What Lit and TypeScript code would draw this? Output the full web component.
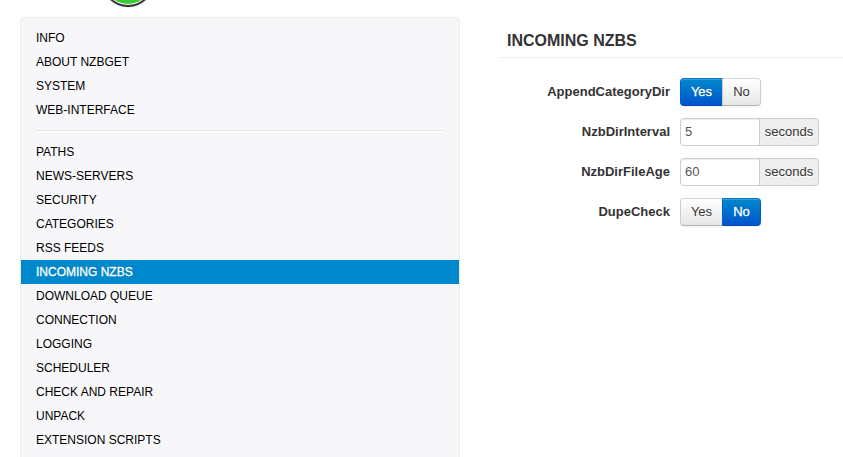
import { LitElement, html, css, svg } from "lit";
import { customElement, property } from "lit/decorators.js";
import { classMap } from "lit/directives/class-map.js";

const INFO_SECTIONS = ["Info", "About NZBGet", "System", "Web-Interface"];
const CONFIG_SECTIONS = [
  "Paths", "News-Servers", "Security", "Categories", "RSS Feeds", "Incoming NZBs",
  "Download Queue", "Connection", "Logging", "Scheduler", "Check and Repair",
  "Unpack", "Extension Scripts",
];

@customElement("option-switch")
export class OptionSwitch extends LitElement {
  @property() value = "Yes";

  static styles = css`
    :host { display: flex; }
    button {
      box-sizing: border-box;
      height: 28px;
      margin: 0;
      padding: 0 0 1px;
      font: 13px/20px "Liberation Sans", Arial, sans-serif;
      color: #333;
      text-shadow: 0 1px 1px rgba(255, 255, 255, 0.75);
      background: linear-gradient(#fff, #e6e6e6);
      border: 1px solid;
      border-color: #d5d5d5 #ccc #b3b3b3;
      box-shadow: inset 0 1px 0 rgba(255, 255, 255, 0.2), 0 1px 2px rgba(0, 0, 0, 0.05);
    }
    .first { width: 43px; border-radius: 4px 0 0 4px; }
    .last { width: 39px; margin-left: -1px; border-radius: 0 4px 4px 0; }
    .on {
      color: #fff;
      text-shadow: 0 -1px 0 rgba(0, 0, 0, 0.25);
      -webkit-text-stroke: 0.3px #fff;
      background: linear-gradient(#0088cc, #0055cc);
      border-color: #0077c5 #0060c8 #0048b8;
    }
  `;

  render() {
    return html`${["Yes", "No"].map(
      (label, i) => html`<button
        class=${classMap({ first: i === 0, last: i === 1, on: label === this.value })}
      >${label}</button>`
    )}`;
  }
}

@customElement("app-root")
export class AppRoot extends LitElement {
  static styles = css`
    :host {
      display: block;
      height: 457px;
      overflow: hidden;
      background: #fff;
      color: #333;
      font: 13px/20px "Liberation Sans", Arial, sans-serif;
    }
    .page { display: flex; flex-direction: column; height: 457px; overflow: hidden; }
    .banner { height: 17px; flex: none; padding-left: 104px; overflow: hidden; }
    .banner svg { display: block; }
    .columns { display: flex; gap: 40px; align-items: flex-start; }
    nav {
      box-sizing: border-box;
      flex: none;
      width: 440px;
      height: 480px;
      margin-left: 20px;
      padding-top: 8px;
      background: #f7f7f9;
      border: 1px solid #ececee;
      border-radius: 4px;
      font-size: 12px;
    }
    .item {
      display: block;
      height: 24px;
      padding-left: 15px;
      line-height: 24px;
      color: #000;
      text-transform: uppercase;
      white-space: nowrap;
    }
    .active { background: #0088cc; color: #fff; text-shadow: 0 -1px 0 rgba(0, 0, 0, 0.2); -webkit-text-stroke: 0.3px #fff; }
    .divider { height: 1px; margin: 8px 16px 8px 15px; background: #e5e5e5; border-bottom: 1px solid #fff; }
    main { flex: 1; min-width: 0; }
    h2 {
      margin: 0 0 20px;
      padding: 14px 0 6px 7px;
      border-bottom: 1px solid #eee;
      font-size: 16px;
      line-height: 20px;
      text-transform: uppercase;
    }
    .row { display: flex; height: 28px; margin-bottom: 12px; gap: 10px; }
    label { width: 170px; text-align: right; font-weight: bold; line-height: 27px; }
    .field { display: flex; }
    input {
      box-sizing: border-box;
      width: 80px;
      height: 28px;
      margin: 0;
      padding: 0 4px 1px;
      border: 1px solid #ccc;
      border-radius: 4px 0 0 4px;
      font: inherit;
      color: #555;
      box-shadow: inset 0 1px 1px rgba(0, 0, 0, 0.075);
    }
    .unit {
      box-sizing: border-box;
      width: 60px;
      height: 28px;
      margin-left: -1px;
      text-align: center;
      line-height: 25px;
      background: #eee;
      border: 1px solid #ccc;
      border-radius: 0 4px 4px 0;
      text-shadow: 0 1px 0 #fff;
    }
  `;

  private item(name: string) {
    return html`<a class=${classMap({ item: true, active: name === "Incoming NZBs" })}>${name}</a>`;
  }

  private numberRow(name: string, value: string) {
    return html`<div class="row">
      <label>${name}</label>
      <div class="field"><input .value=${value} /><span class="unit">seconds</span></div>
    </div>`;
  }

  private switchRow(name: string, value: string) {
    return html`<div class="row">
      <label>${name}</label><option-switch .value=${value}></option-switch>
    </div>`;
  }

  render() {
    return html`<div class="page">
      <div class="banner">
        <svg width="48" height="17" viewBox="0 0 48 17">
          ${svg`<circle cx="24" cy="-19" r="26.6" fill="#ccc"/>
          <circle cx="24" cy="-19" r="25.9" fill="#333"/>
          <circle cx="24" cy="-19" r="24" fill="#fff"/>
          <circle cx="24" cy="-19" r="23.1" fill="#3bc936"/>`}
        </svg>
      </div>
      <div class="columns">
        <nav>
          ${INFO_SECTIONS.map((s) => this.item(s))}
          <div class="divider"></div>
          ${CONFIG_SECTIONS.map((s) => this.item(s))}
        </nav>
        <main>
          <h2>Incoming NZBs</h2>
          ${this.switchRow("AppendCategoryDir", "Yes")}
          ${this.numberRow("NzbDirInterval", "5")}
          ${this.numberRow("NzbDirFileAge", "60")}
          ${this.switchRow("DupeCheck", "No")}
        </main>
      </div>
    </div>`;
  }
}
